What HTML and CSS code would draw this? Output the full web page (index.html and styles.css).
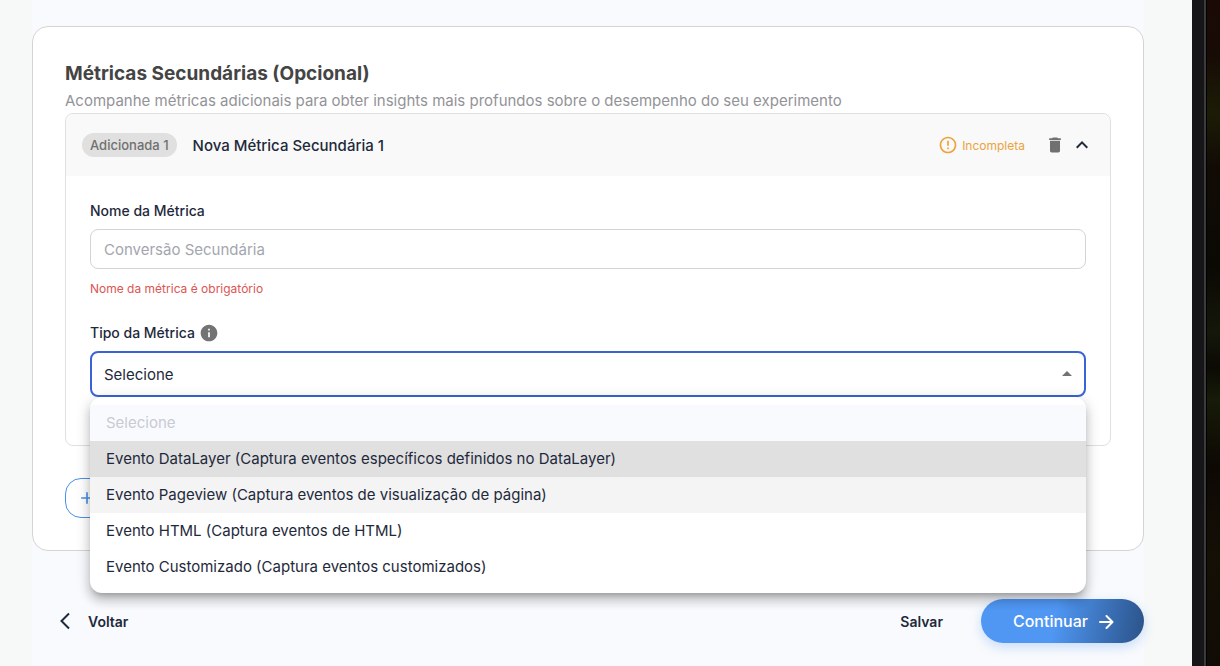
FILE: index.html
```html
<!DOCTYPE html>
<html lang="pt-BR">
<head>
    <meta charset="UTF-8">
    <meta name="viewport" content="width=device-width, initial-scale=1">
    <title>Métricas Secundárias</title>

    <link rel="stylesheet" href="styles.css">
</head>

<body>
<div class="app">
  <main class="content">
    <section class="card">
      <h1 class="card-title">Métricas Secundárias (Opcional)</h1>
      <p class="card-subtitle">Acompanhe métricas adicionais para obter insights mais profundos sobre o desempenho do seu experimento</p>

      <div class="metric">
        <div class="metric-header">
          <span class="chip">Adicionada 1</span>
          <h2 class="metric-name">Nova Métrica Secundária 1</h2>
          <span class="status">
            <svg width="20" height="20" viewBox="0 0 24 24" fill="currentColor"><path d="M11 15h2v2h-2zm0-8h2v6h-2zm.99-5C6.47 2 2 6.48 2 12s4.47 10 9.99 10C17.52 22 22 17.52 22 12S17.52 2 11.99 2zM12 20c-4.42 0-8-3.58-8-8s3.58-8 8-8 8 3.58 8 8-3.58 8-8 8z"/></svg>
            Incompleta
          </span>
          <button class="icon-button trash" type="button" aria-label="Excluir">
            <svg width="20" height="20" viewBox="0 0 24 24" fill="currentColor"><path d="M6 19c0 1.1.9 2 2 2h8c1.1 0 2-.9 2-2V7H6v12zM19 4h-3.5l-1-1h-5l-1 1H5v2h14V4z"/></svg>
          </button>
          <button class="icon-button" type="button" aria-label="Recolher">
            <svg width="24" height="24" viewBox="0 0 24 24" fill="currentColor"><path d="M12 8l-6 6 1.41 1.41L12 10.83l4.59 4.58L18 14z"/></svg>
          </button>
        </div>

        <div class="metric-body">
          <div class="label-row">
            <label for="metricName">Nome da Métrica</label>
          </div>
          <input class="text-input" id="metricName" type="text" placeholder="Conversão Secundária">
          <p class="error">Nome da métrica é obrigatório</p>

          <div class="label-row">
            <label for="metricType">Tipo da Métrica</label>
            <svg class="info" width="20" height="20" viewBox="0 0 24 24" fill="currentColor"><path d="M12 2C6.48 2 2 6.48 2 12s4.48 10 10 10 10-4.48 10-10S17.52 2 12 2zm1 15h-2v-6h2v6zm0-8h-2V7h2v2z"/></svg>
          </div>
          <div class="select-box">
            <select class="select" id="metricType">
              <option>Selecione</option>
            </select>
            <svg class="select-arrow" width="24" height="24" viewBox="0 0 24 24" fill="currentColor"><path d="M7 14l5-5 5 5z"/></svg>

            <ul class="menu" role="listbox">
              <li class="option disabled" role="option" aria-disabled="true">Selecione</li>
              <li class="option selected" role="option">Evento DataLayer (Captura eventos específicos definidos no DataLayer)</li>
              <li class="option hover" role="option">Evento Pageview (Captura eventos de visualização de página)</li>
              <li class="option" role="option">Evento HTML (Captura eventos de HTML)</li>
              <li class="option" role="option">Evento Customizado (Captura eventos customizados)</li>
            </ul>
          </div>
        </div>
      </div>

      <button class="add-button" type="button" aria-label="Adicionar métrica">
        <svg width="20" height="20" viewBox="0 0 24 24" fill="currentColor"><path d="M19 13h-6v6h-2v-6H5v-2h6V5h2v6h6z"/></svg>
      </button>
    </section>

    <footer class="actions">
      <button class="text-button back" type="button">
        <svg width="16" height="20" viewBox="0 0 16 20" fill="none" stroke="currentColor" stroke-width="2"><path d="M13 2.500L5.500 10l7.500 7.500"/></svg>
        Voltar
      </button>
      <button class="text-button save" type="button">Salvar</button>
      <button class="next-button" type="button">
        Continuar
        <svg width="16" height="16" viewBox="0 0 16 16" fill="none" stroke="currentColor" stroke-width="2" stroke-linecap="round" stroke-linejoin="round"><path d="M2 9h12M8.500 3l6 6-6 6"/></svg>
      </button>
    </footer>
  </main>
</div>
<div class="window-edge"></div>
<div class="desktop"></div>
</body>
</html>
```
FILE: styles.css
```css
* {
    box-sizing: border-box;
}

body {
    display: flex;
    min-height: 100vh;
    margin: 0;
    font-family: Inter, "Liberation Sans", sans-serif;
    font-size: 15px;
    color: #1e293b;
    background-color: #f7f9f8;
}

h1, h2, p, ul {
    margin: 0;
    padding: 0;
}

button, input, select {
    font-family: inherit;
    color: inherit;
}

button {
    padding: 0;
    border: none;
    background: none;
    cursor: pointer;
}

svg {
    display: block;
    flex-shrink: 0;
}

.app {
    flex: 1;
    display: flex;
    padding: 0 48px 0 32px;
}

.content {
    flex: 1;
    padding-top: 26px;
    background-color: #f9fafd;
}

/* right side of the browser window and the wallpaper behind it */
.window-edge {
    width: 14px;
    background-color: #161618;
    border-right: 2px solid #3b3b3e;
}

.desktop {
    width: 14px;
    border-left: 1px solid #000000;
    background: linear-gradient(#1a0a05, #170b05 8%, #1c1c06 17%, #120b05 25%, #0a0904 40%, #15170a 50%, #0b0a04 55%, #171b08 60%, #0d0804 70%, #141005 84%, #110b05);
}

.card {
    padding: 32px;
    border: 1px solid #d4d4d6;
    border-radius: 16px;
    background-color: #ffffff;
}

.card-title {
    font-size: 19px;
    line-height: 30px;
    font-weight: 700;
    color: #444444;
}

.card-subtitle {
    line-height: 24px;
    color: #939397;
}

.metric {
    border: 1px solid #e0e0e0;
    border-radius: 8px;
}

.metric-header {
    display: flex;
    align-items: center;
    height: 62px;
    padding: 0 16px;
    border-radius: 8px 8px 0 0;
    background-color: #f9f9f9;
}

.chip {
    padding: 0 8px;
    border-radius: 12px;
    font-size: 13px;
    line-height: 24px;
    font-weight: 500;
    color: #707070;
    background-color: #e0e0e0;
}

.metric-name {
    flex: 1;
    margin-left: 16px;
    font-size: 15px;
    font-weight: 500;
}

.status {
    display: flex;
    align-items: center;
    gap: 4px;
    margin-right: 20px;
    font-size: 12px;
    color: #eca33b;
}

.trash {
    margin-right: 5px;
    color: #707070;
}

.metric-body {
    padding: 24px 24px 48px;
}

.label-row {
    display: flex;
    align-items: center;
    gap: 4px;
    height: 21px;
    margin-bottom: 8px;
    font-size: 14px;
    font-weight: 500;
}

.info {
    color: #737373;
}

.text-input {
    display: block;
    width: 100%;
    height: 40px;
    padding: 0 13px;
    border: 1px solid #d4d4d8;
    border-radius: 8px;
    font-size: 15px;
    background-color: #ffffff;
}

.text-input::placeholder {
    color: #a3a6ae;
}

.error {
    margin: 8px 0 21px;
    font-size: 12px;
    line-height: 24px;
    color: #dc5553;
}

.select-box {
    position: relative;
    display: grid;
    align-items: center;
}

.select {
    grid-area: 1 / 1;
    height: 46px;
    padding: 0 12px;
    border: 2px solid #3b63d6;
    border-radius: 8px;
    font-size: 15px;
    background-color: #ffffff;
    appearance: none;
}

.select-arrow {
    grid-area: 1 / 1;
    justify-self: end;
    margin-right: 7px;
    color: #737373;
    pointer-events: none;
}

.menu {
    position: absolute;
    top: 100%;
    left: 0;
    right: 0;
    z-index: 10;
    padding: 8px 0;
    border-radius: 12px;
    list-style: none;
    background-color: #ffffff;
    box-shadow: 0 5px 5px -3px rgba(0, 0, 0, 0.2), 0 8px 10px 1px rgba(0, 0, 0, 0.14), 0 3px 14px 2px rgba(0, 0, 0, 0.12);
}

.option {
    padding: 0 16px;
    line-height: 36px;
}

.option.disabled {
    color: #c8cbd2;
    background-color: #f9fafe;
}

.option.selected {
    background-color: #e0e0e0;
}

.option.hover {
    background-color: #f4f4f4;
}

.add-button {
    display: flex;
    align-items: center;
    width: 160px;
    height: 40px;
    margin-top: 32px;
    padding-left: 11px;
    border: 1px solid #4a90e8;
    border-radius: 16px;
    color: #4a90e8;
}

.actions {
    display: flex;
    align-items: center;
    margin-top: 48px;
}

.text-button {
    font-size: 14px;
    font-weight: 600;
}

.back {
    display: flex;
    align-items: center;
    gap: 16px;
    margin-left: 24px;
}

.save {
    margin-left: auto;
    margin-right: 38px;
}

.next-button {
    display: flex;
    align-items: center;
    gap: 10px;
    height: 44px;
    padding: 0 30px 0 32px;
    border-radius: 22px;
    font-size: 16px;
    font-weight: 500;
    color: #ffffff;
    background: linear-gradient(100deg, #4f97f3 45%, #2b5288);
    box-shadow: 0 4px 12px rgba(79, 151, 243, 0.3);
}
```
